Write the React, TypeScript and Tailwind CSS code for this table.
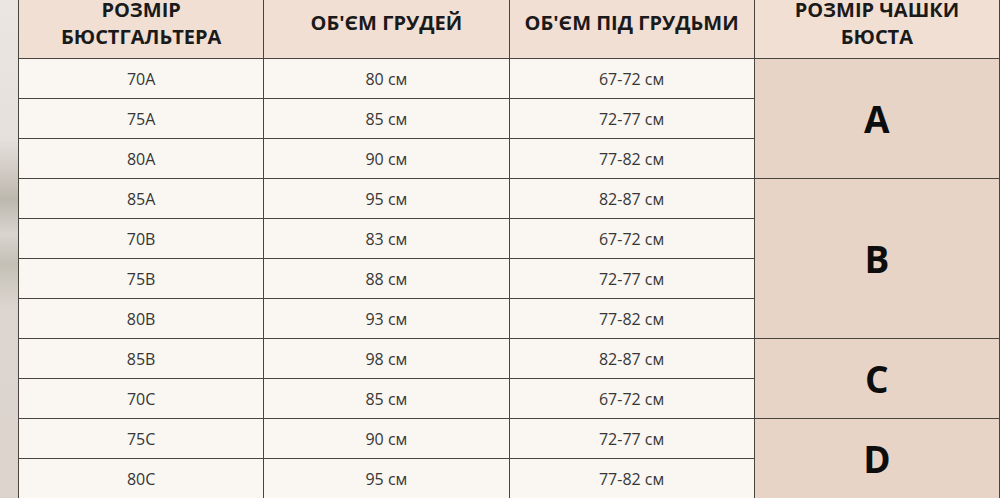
import React from "react";

const rows: [string, string, string][] = [
  ["70A", "80 см", "67-72 см"],
  ["75A", "85 см", "72-77 см"],
  ["80A", "90 см", "77-82 см"],
  ["85A", "95 см", "82-87 см"],
  ["70B", "83 см", "67-72 см"],
  ["75B", "88 см", "72-77 см"],
  ["80B", "93 см", "77-82 см"],
  ["85B", "98 см", "82-87 см"],
  ["70C", "85 см", "67-72 см"],
  ["75C", "90 см", "72-77 см"],
  ["80C", "95 см", "77-82 см"],
];

const cups: { letter: string; span: string; start: string }[] = [
  { letter: "A", span: "row-span-3", start: "row-start-2" },
  { letter: "B", span: "row-span-4", start: "row-start-5" },
  { letter: "C", span: "row-span-2", start: "row-start-9" },
  { letter: "D", span: "row-span-2", start: "row-start-11" },
];

export default function App() {
  const font = { fontFamily: '"Open Sans", "Noto Sans", sans-serif' };
  return (
    <div className="flex h-[498px] w-[1000px] overflow-hidden bg-[#faf6f2]" style={font}>
      <div className="w-[18px] shrink-0 bg-[linear-gradient(180deg,#ebe6e2_0%,#e6e0dc_28%,#bdb8ae_40%,#d9d5cf_47%,#c4c0b6_53%,#ddd6d0_62%,#dcd3cc_100%)]" />
      <div className="-mt-[13px] grid flex-1 grid-cols-4 grid-rows-[72px_repeat(11,40px)] border-l border-[#48453f]">
        <div className="col-start-1 row-start-1 flex items-center justify-center border-r border-b border-[#48453f] bg-[#f2dfd3] text-center text-[20px] font-bold leading-[27px] text-[#1a1a1a]">
          РОЗМІР
          <br />
          БЮСТГАЛЬТЕРА
        </div>
        <div className="col-start-2 row-start-1 flex items-center justify-center border-r border-b border-[#48453f] bg-[#f2dfd3] text-center text-[20px] font-bold leading-[27px] text-[#1a1a1a]">
          ОБ'ЄМ ГРУДЕЙ
        </div>
        <div className="col-start-3 row-start-1 flex items-center justify-center border-r border-b border-[#48453f] bg-[#f2dfd3] text-center text-[20px] font-bold leading-[27px] text-[#1a1a1a]">
          ОБ'ЄМ ПІД ГРУДЬМИ
        </div>
        <div className="col-start-4 row-start-1 flex items-center justify-center border-r border-b border-[#48453f] bg-[#f2dfd3] text-center text-[20px] font-bold leading-[27px] text-[#1a1a1a]">
          РОЗМІР ЧАШКИ
          <br />
          БЮСТА
        </div>
        {rows.map((r, i) => (
          <React.Fragment key={i}>
            {r.map((v, j) => (
              <div
                key={j}
                className="flex items-center justify-center border-r border-b border-[#48453f] bg-[#faf6f2] text-[16px] text-[#363636]"
                style={{ gridRow: i + 2, gridColumn: j + 1 }}
              >
                {v}
              </div>
            ))}
          </React.Fragment>
        ))}
        {cups.map((c) => (
          <div
            key={c.letter}
            className={`col-start-4 ${c.start} ${c.span} flex items-center justify-center border-r border-b border-[#48453f] bg-[#e7d4c7] text-[37px] font-bold text-[#0d0d0d]`}
          >
            {c.letter}
          </div>
        ))}
      </div>
    </div>
  );
}
